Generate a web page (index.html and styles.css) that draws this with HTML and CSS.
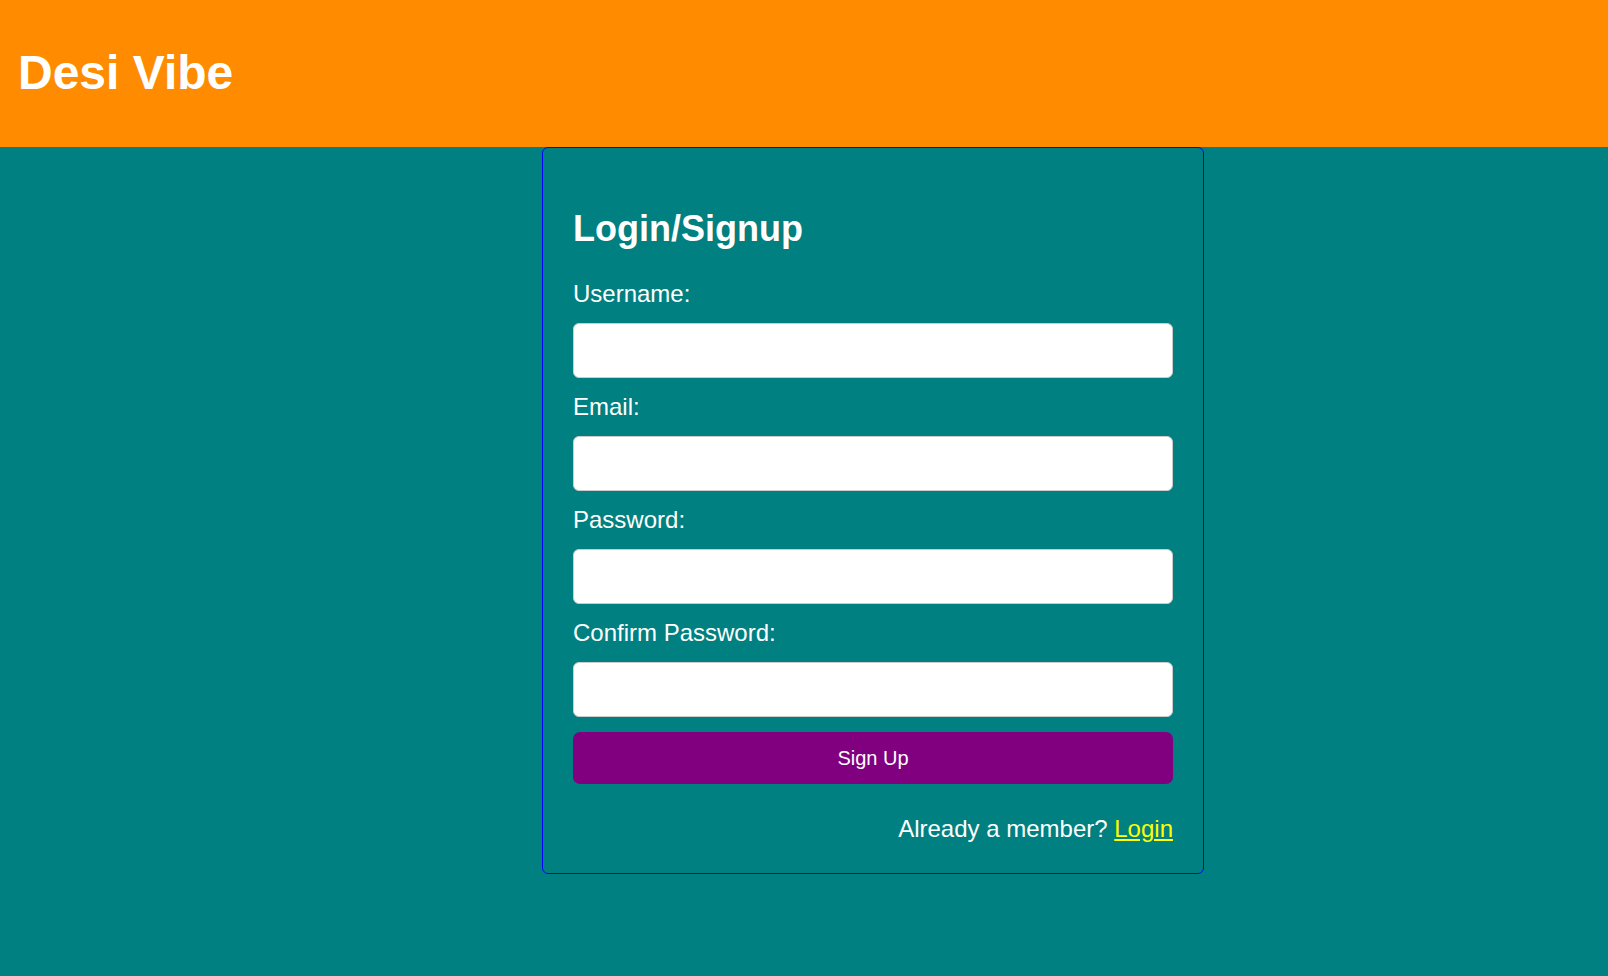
FILE: index.html
```html
<!DOCTYPE html>
<html lang="en">
<head>
<meta charset="utf-8">
<title>Desi Vibe</title>
<link rel="stylesheet" href="styles.css">
</head>
<body>
<header class="site-header">
  <h1 class="brand">Desi Vibe</h1>
</header>
<main class="page">
  <section class="card">
    <h2 class="card-title">Login/Signup</h2>
    <form class="form">
      <label class="field-label" for="username">Username:</label>
      <input class="field-input" type="text" id="username">
      <label class="field-label" for="email">Email:</label>
      <input class="field-input" type="email" id="email">
      <label class="field-label" for="password">Password:</label>
      <input class="field-input" type="password" id="password">
      <label class="field-label" for="confirm">Confirm Password:</label>
      <input class="field-input" type="password" id="confirm">
      <button class="submit-btn" type="button">Sign Up</button>
    </form>
    <p class="switch">Already a member? <a class="switch-link" href="#">Login</a></p>
  </section>
</main>
</body>
</html>
```
FILE: styles.css
```css
* { box-sizing: border-box; }

html, body {
  margin: 0;
  padding: 0;
  height: 100%;
}

body {
  background: #008080;
  font-family: "Liberation Sans", Arial, sans-serif;
  color: #ffffff;
}

.site-header {
  background: #ff8c00;
  height: 147px;
  padding: 45px 18px 0;
}

.brand {
  margin: 0;
  font-size: 48px;
  line-height: 55px;
  font-weight: bold;
  color: #ffffff;
}

.page {
  display: flex;
}

.card {
  margin-left: 542px;
  width: 662px;
  border: 1px solid #0000ff;
  border-radius: 6px;
  padding: 30px 30px 30px;
}

.card-title {
  margin: 30px 0 31px;
  font-size: 36px;
  line-height: 41px;
  font-weight: bold;
}

.form {
  display: flex;
  flex-direction: column;
}

.field-label {
  display: block;
  font-size: 24px;
  line-height: 28px;
  margin-bottom: 15px;
}

.field-input {
  display: block;
  width: 100%;
  height: 54.5px;
  margin: 0 0 15.6px;
  border: 1px solid #cccccc;
  border-radius: 6px;
  background: #ffffff;
  font-size: 20px;
  padding: 0 15px;
}

.submit-btn {
  display: block;
  width: 100%;
  height: 52px;
  margin: 0;
  border: none;
  border-radius: 7px;
  background: #800080;
  color: #ffffff;
  font-family: "Liberation Sans", Arial, sans-serif;
  font-size: 20px;
  padding: 0;
}

.switch {
  margin: 30.8px 0 0;
  font-size: 24px;
  line-height: 28px;
  text-align: right;
}

.switch-link {
  color: #ffff00;
  text-decoration: underline;
}
```
